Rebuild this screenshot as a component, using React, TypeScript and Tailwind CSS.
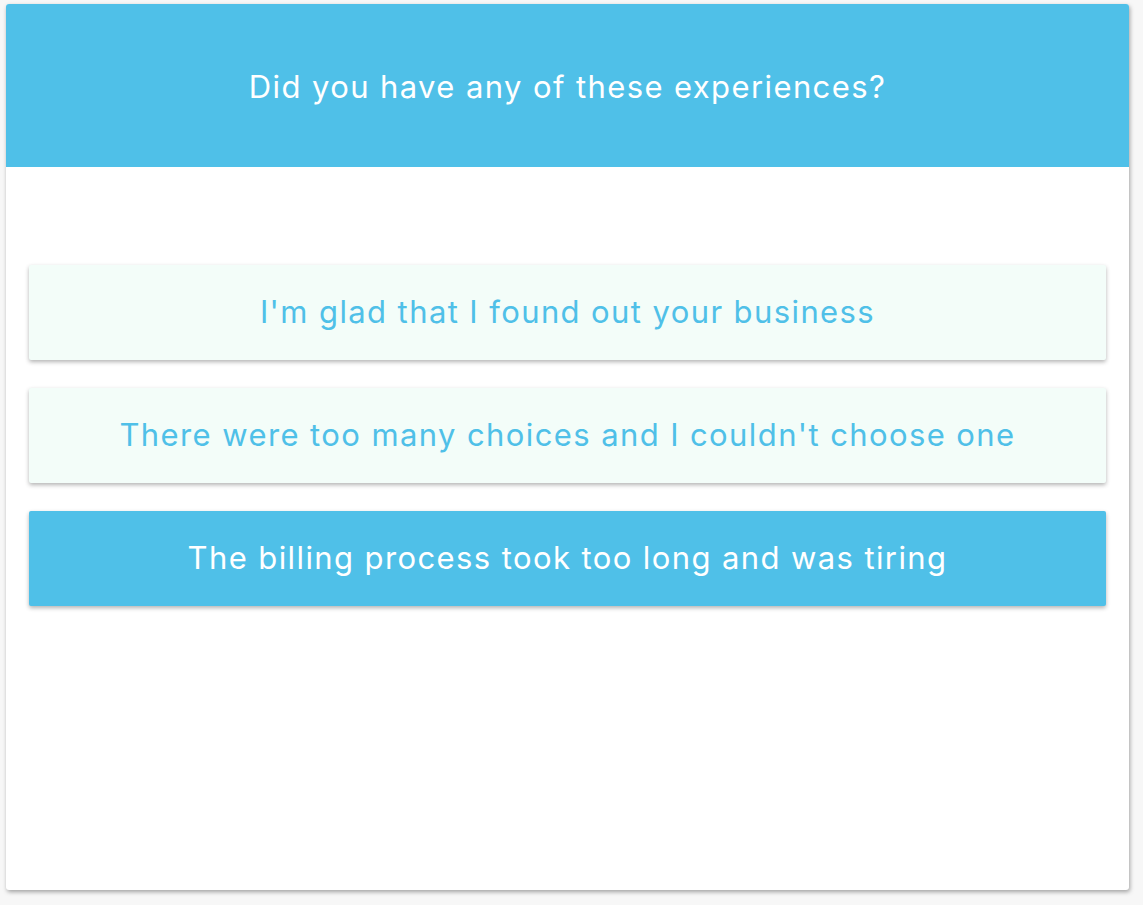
import React, { useState } from 'react'

const options = [
  "I'm glad that I found out your business",
  "There were too many choices and I couldn't choose one",
  'The billing process took too long and was tiring',
]

const App = () => {
  const [selected, setSelected] = useState(2)

  return (
    <div className="min-h-[905px] bg-[#f7f7f7] pt-[4px] pl-[6px] pr-[14px] pb-[15px]" style={{ fontFamily: 'Inter, "Noto Sans", sans-serif' }}>
      <div className="flex h-[886px] flex-col overflow-hidden rounded-[3px] bg-white shadow-[1px_2px_4px_rgba(0,0,0,0.35)]">
        <div className="flex h-[163px] items-center justify-center bg-[#4fc0e8] pt-[4px]">
          <h1 className="text-[31px] font-normal tracking-[1.4px] text-white">Did you have any of these experiences?</h1>
        </div>
        <div className="flex flex-col gap-[28px] px-[23px] pt-[98px]">
          {options.map((o, i) => (
            <button
              key={i}
              onClick={() => setSelected(i)}
              className={
                i === selected
                  ? 'flex h-[95px] items-center justify-center rounded-[2px] bg-[#4fc0e8] text-[31px] tracking-[1.4px] text-white shadow-[0_2px_4px_rgba(0,0,0,0.3)]'
                  : 'flex h-[95px] items-center justify-center rounded-[2px] bg-[#f3fdf9] text-[31px] tracking-[1.4px] text-[#4fc0e8] shadow-[0_2px_4px_rgba(0,0,0,0.3)]'
              }
            >
              {o}
            </button>
          ))}
        </div>
      </div>
    </div>
  )
}

export default App
